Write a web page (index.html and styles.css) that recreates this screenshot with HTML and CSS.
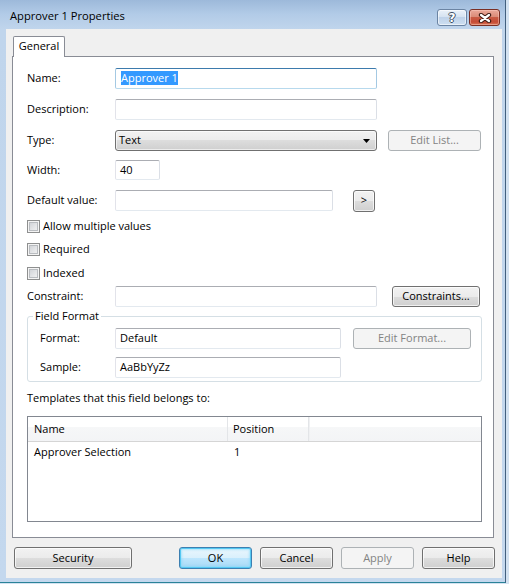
FILE: index.html
```html
<!DOCTYPE html>
<html lang="en">
<head>
<meta charset="utf-8">
<title>Approver 1 Properties</title>
<link rel="stylesheet" href="styles.css">
</head>
<body>
<div class="window">
  <div class="titlebar">
    <span class="title">Approver 1 Properties</span>
    <div class="caption-buttons">
      <div class="cap cap-help"><span class="cap-q">?</span></div>
      <div class="cap cap-close">
        <svg class="cap-x" width="14" height="10" viewBox="0 0 14 10">
          <path d="M3 2 L11 8 M11 2 L3 8" stroke="#3d1a14" stroke-width="4.4" stroke-linecap="round"/>
          <path d="M3 2 L11 8 M11 2 L3 8" stroke="#ffffff" stroke-width="2.2" stroke-linecap="round"/>
        </svg>
      </div>
    </div>
  </div>

  <div class="client">
    <div class="tabstrip">
      <div class="tab">General</div>
    </div>

    <div class="panel">
      <div class="row row-name">
        <span class="lbl">Name:</span>
        <div class="edit edit-focus w-262"><span class="sel">Approver 1</span></div>
      </div>

      <div class="row row-gap10">
        <span class="lbl">Description:</span>
        <div class="edit w-262"></div>
      </div>

      <div class="row row-gap10">
        <span class="lbl">Type:</span>
        <div class="combo w-262">
          <span class="combo-text">Text</span>
          <svg class="combo-arrow" width="7" height="4" viewBox="0 0 7 4"><path d="M0 0 H7 L3.5 4 Z" fill="#000"/></svg>
        </div>
        <div class="btn btn-disabled btn-editlist">Edit List...</div>
      </div>

      <div class="row row-width">
        <span class="lbl">Width:</span>
        <div class="edit edit-short">40</div>
      </div>

      <div class="row row-gap10">
        <span class="lbl">Default value:</span>
        <div class="edit w-218"></div>
        <div class="btn btn-more">&gt;</div>
      </div>

      <div class="check-row check-1">
        <span class="chk"></span><span class="chk-text">Allow multiple values</span>
      </div>
      <div class="check-row check-2">
        <span class="chk"></span><span class="chk-text">Required</span>
      </div>
      <div class="check-row check-3">
        <span class="chk"></span><span class="chk-text">Indexed</span>
      </div>

      <div class="row row-constraint">
        <span class="lbl">Constraint:</span>
        <div class="edit w-262"></div>
        <div class="btn btn-constraints">Constraints...</div>
      </div>

      <fieldset class="group">
        <legend class="group-title">Field Format</legend>
        <div class="group-body">
          <div class="row">
            <span class="lbl lbl-group">Format:</span>
            <div class="edit w-226">Default</div>
            <div class="btn btn-disabled btn-editformat">Edit Format...</div>
          </div>
          <div class="row row-sample">
            <span class="lbl lbl-group">Sample:</span>
            <div class="edit w-226">AaBbYyZz</div>
          </div>
        </div>
      </fieldset>

      <div class="caption">Templates that this field belongs to:</div>

      <div class="list">
        <div class="list-head">
          <div class="col col-name">Name</div>
          <div class="col col-pos">Position</div>
          <div class="col col-fill"></div>
        </div>
        <div class="list-row">
          <div class="cell col-name">Approver Selection</div>
          <div class="cell col-pos">1</div>
        </div>
      </div>
    </div>

    <div class="footer">
      <div class="btn btn-security">Security</div>
      <div class="footer-right">
        <div class="btn btn-default btn-footer">OK</div>
        <div class="btn btn-footer">Cancel</div>
        <div class="btn btn-disabled btn-footer">Apply</div>
        <div class="btn btn-footer">Help</div>
      </div>
    </div>
  </div>
</div>
</body>
</html>
```

FILE: styles.css
```css
* {
  box-sizing: border-box;
}

html,
body {
  margin: 0;
  padding: 0;
}

body {
  width: 509px;
  height: 584px;
  overflow: hidden;
  background: #d3e2f1;
  font-family: "Open Sans", "Noto Sans", sans-serif;
  font-size: 11px;
  color: #000;
}

/* ---------- window frame ---------- */

.window {
  width: 506px;
  height: 583px;
  display: flex;
  flex-direction: column;
  background: linear-gradient(#9db9da 0, #b2cbe7 14px, #c0d5ec 29px, #c4d8ee 100%);
  border-right: 1px solid #43607e;
  border-bottom: 1px solid #2a8398;
}

.titlebar {
  flex: none;
  height: 29px;
  display: flex;
  align-items: flex-start;
  padding-left: 10px;
}

.title {
  margin-top: 8px;
  line-height: 16px;
  font-size: 11.2px;
}

.caption-buttons {
  margin-left: auto;
  margin-top: 9px;
  margin-right: 5px;
  display: flex;
  gap: 2px;
}

.cap {
  height: 17px;
  border: 1px solid;
  border-radius: 3px;
  display: flex;
  align-items: center;
  justify-content: center;
}

.cap-help {
  width: 30px;
  border-color: #6b84a3;
  background: linear-gradient(#eaf1f9 0, #d6e3f1 45%, #bfd2e9 50%, #cddff1 100%);
  box-shadow: inset 0 0 0 1px rgba(255, 255, 255, 0.55);
}

.cap-q {
  font-family: "DejaVu Sans", sans-serif;
  font-weight: bold;
  font-size: 12px;
  line-height: 12px;
  color: #fff;
  text-shadow: -1px 0 #3f4f63, 1px 0 #3f4f63, 0 -1px #3f4f63, 0 1px #3f4f63;
}

.cap-close {
  width: 31px;
  border-color: #7a2f24;
  background: linear-gradient(#eaa99a 0, #da8b78 45%, #c85a43 50%, #c54b36 80%, #d97758 100%);
  box-shadow: inset 0 0 0 1px rgba(255, 210, 200, 0.45);
}

/* ---------- client area ---------- */

.client {
  flex: none;
  margin-left: 6px;
  width: 496px;
  height: 549px;
  background: #f0f0f0;
  padding-top: 7px;
}

.tabstrip {
  display: flex;
  padding-left: 7px;
  height: 21px;
  position: relative;
  z-index: 1;
}

.tab {
  width: 52px;
  height: 21px;
  border: 1px solid #898c95;
  border-bottom: 0;
  border-radius: 2px 2px 0 0;
  background: #fff;
  text-align: center;
  line-height: 17px;
}

.panel {
  margin: -1px 0 0 6px;
  width: 482px;
  height: 482px;
  border: 1px solid #898c95;
  background: #fff;
  padding-left: 14px;
}

/* ---------- form rows ---------- */

.row {
  display: flex;
  align-items: center;
  height: 21px;
}

.row-name {
  margin-top: 11px;
}

.row-gap10 {
  margin-top: 10px;
}

.row-width {
  margin-top: 9px;
  height: 20px;
}

.row-constraint {
  margin-top: 6px;
}

.row-sample {
  margin-top: 8px;
}

.lbl {
  flex: none;
  width: 88px;
  padding-bottom: 2px;
}

.lbl-group {
  width: 75px;
}

.edit {
  flex: none;
  height: 21px;
  border: 1px solid;
  border-color: #abadb3 #dbdfe6 #e3e9ef #e2e3ea;
  border-radius: 2px;
  background: #fff;
  padding: 0 4px 2px;
  display: flex;
  align-items: center;
  white-space: nowrap;
}

.edit-focus {
  border-color: #3d7bad #a4c9e3 #b7d9ed #a4c9e3;
  padding-left: 5px;
}

.sel {
  background: #3399ff;
  color: #fff;
  line-height: 14px;
}

.w-262 {
  width: 262px;
}

.w-218 {
  width: 218px;
}

.w-226 {
  width: 226px;
}

.edit-short {
  width: 45px;
  height: 20px;
}

.combo {
  flex: none;
  height: 21px;
  border: 1px solid #707070;
  border-radius: 3px;
  background: linear-gradient(#f2f2f2 0, #ebebeb 50%, #dddddd 50%, #cfcfcf 100%);
  box-shadow: inset 0 0 0 1px rgba(255, 255, 255, 0.6);
  display: flex;
  align-items: center;
  padding: 0 6px 0 3px;
}

.combo-text {
  flex: 1;
  padding-bottom: 2px;
}

.combo-arrow {
  display: block;
}

/* ---------- push buttons ---------- */

.btn {
  flex: none;
  height: 21px;
  border: 1px solid #707070;
  border-radius: 3px;
  background: linear-gradient(#f2f2f2 0, #ebebeb 50%, #dddddd 50%, #cfcfcf 100%);
  box-shadow: inset 0 0 0 1px rgba(255, 255, 255, 0.7);
  display: flex;
  align-items: center;
  justify-content: center;
  padding-bottom: 2px;
  white-space: nowrap;
}

.btn-disabled {
  border-color: #adb2b5;
  background: #f4f4f4;
  box-shadow: none;
  color: #838383;
}

.btn-default {
  border-color: #3c7fb1;
  background: linear-gradient(#eaf6fd 0, #d9f0fc 50%, #bee6fd 50%, #a7d9f5 100%);
  box-shadow: inset 0 0 0 1px #55c8f2, inset 0 0 2px 2px rgba(120, 215, 250, 0.5);
}

.btn-editlist {
  margin-left: 11px;
  width: 93px;
}

.btn-more {
  margin-left: 20px;
  width: 22px;
  height: 22px;
}

.btn-constraints {
  margin-left: 15px;
  width: 88px;
}

.btn-editformat {
  margin-left: 12px;
  width: 118px;
}

/* ---------- check boxes ---------- */

.check-row {
  display: flex;
  align-items: center;
  height: 13px;
}

.check-1 {
  margin-top: 9px;
}

.check-2 {
  margin-top: 10px;
}

.check-3 {
  margin-top: 11px;
}

.chk {
  flex: none;
  width: 13px;
  height: 13px;
  border: 1px solid #8e8f8f;
  background: linear-gradient(135deg, #c9ccd1 0, #e6e7e9 60%, #f5f5f5 100%);
  box-shadow: inset 0 0 0 1px #f4f4f4, inset 0 0 0 2px #b9bcc0;
}

.chk-text {
  margin-left: 3px;
  padding-bottom: 2px;
}

/* ---------- group box ---------- */

.group {
  margin: 1px 0 0 0;
  width: 455px;
  min-width: 0;
  padding: 3px 0 3px 0;
  border: 1px solid #d5dfe5;
  border-radius: 3px;
}

.group-title {
  margin-left: 5px;
  padding: 0 2px 2px;
  line-height: 15px;
}

.group-body {
  padding-left: 12px;
}

/* ---------- template list ---------- */

.caption {
  margin-top: 8px;
  margin-bottom: 1px;
  line-height: 15px;
}

.list {
  margin-top: 11px;
  width: 455px;
  height: 106px;
  border: 1px solid #828790;
  background: #fff;
}

.list-head {
  display: flex;
  height: 25px;
  border-bottom: 1px solid #d5d5d5;
  background: linear-gradient(#ffffff 0, #ffffff 40%, #f6f7f8 41%, #f3f4f6 100%);
}

.col {
  display: flex;
  align-items: center;
  padding-bottom: 2px;
  border-right: 1px solid #e3e5e8;
}

.col-name {
  width: 200px;
  padding-left: 6px;
}

.col-pos {
  width: 81px;
  padding-left: 5px;
}

.col-fill {
  flex: 1;
  border-right: 0;
  border-left: 1px solid #f0f1f3;
}

.list-row {
  display: flex;
  height: 20px;
  align-items: center;
}

.cell {
  padding-bottom: 2px;
}

.cell.col-name {
  padding-left: 6px;
}

.cell.col-pos {
  padding-left: 6px;
}

/* ---------- dialog buttons ---------- */

.footer {
  display: flex;
  margin-top: 9px;
  padding: 0 7px 0 8px;
}

.btn-security {
  width: 118px;
  height: 22px;
}

.footer-right {
  margin-left: auto;
  display: flex;
  gap: 8px;
}

.btn-footer {
  width: 73px;
  height: 22px;
}
```
